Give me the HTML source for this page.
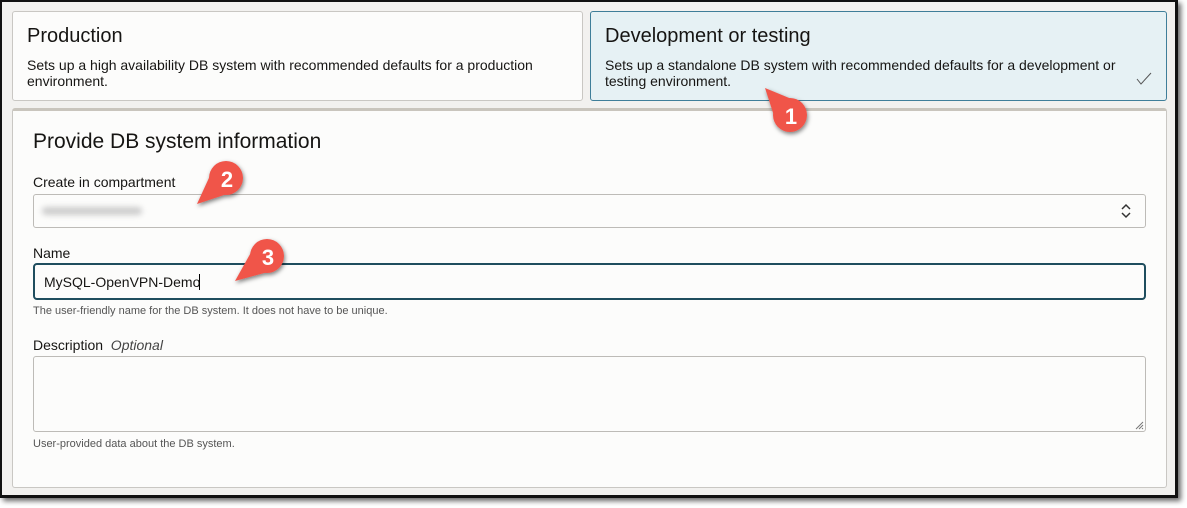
<!DOCTYPE html>
<html><head><meta charset="utf-8"><style>
*{box-sizing:border-box;margin:0;padding:0}
body{width:1187px;height:508px;background:#fff;font-family:"Liberation Sans",Arial,sans-serif;color:#161513;position:relative;overflow:hidden}
.frame{position:absolute;left:0;top:0;width:1178px;height:498px;border:2px solid #111;border-right-width:3px;border-bottom-width:3px;background:#f2f1ef;box-shadow:3px 3px 5px rgba(0,0,0,.6)}
.card{position:absolute;top:11px;height:90px;border:1px solid #c9c7c3;border-radius:3px;background:#fcfcfb;padding:0 14px}
.card h2{font-weight:normal;font-size:20px;margin-top:13px}
.card p{font-size:14px;line-height:16px;margin-top:9px}
.panel{position:absolute;left:12px;top:108px;width:1155px;height:380px;background:#fcfcfb;border:1px solid #c9c7c3;border-top:3px solid #c9c5bd;border-radius:3px}
.abs{position:absolute}
.lbl{font-size:14px}
.box{position:absolute;left:33px;width:1113px;border:1px solid #bdbbb7;border-radius:3px;background:#fcfcfb}
.help{font-size:11px;color:#555}
</style></head><body>
<div class="frame"></div>
<div class="card" style="left:12px;width:571px"><h2>Production</h2><p>Sets up a high availability DB system with recommended defaults for a production<br>environment.</p></div>
<div class="card" style="left:590px;width:577px;background:#e6f1f4;border-color:#3f7e99"><h2>Development or testing</h2><p>Sets up a standalone DB system with recommended defaults for a development or<br>testing environment.</p>
<svg class="abs" style="left:545px;top:60px" width="16" height="14"><path d="M1 7 L5 12 L15 1" fill="none" stroke="#555" stroke-width="1"/></svg></div>
<div class="panel"></div>
<div class="abs" style="left:33px;top:130px;font-size:21px">Provide DB system information</div>
<div class="abs lbl" style="left:33px;top:174px">Create in compartment</div>
<div class="box" style="top:194px;height:34px">
<div class="abs" style="left:8px;top:12px;width:100px;height:8px;background:#ccc;border-radius:4px;filter:blur(3px)"></div>
<svg class="abs" style="left:1086px;top:8px" width="12" height="16"><path d="M2 6 L6 2 L10 6 M2 10 L6 14 L10 10" fill="none" stroke="#333" stroke-width="1.5"/></svg></div>
<div class="abs lbl" style="left:33px;top:245px">Name</div>
<div class="box" style="top:263px;height:37px;border:2px solid #1f4d5e;border-radius:4px"><span class="abs" style="left:9px;top:9px;font-size:14px">MySQL-OpenVPN-Demo<span style="border-left:1px solid #000;margin-left:-1px"></span></span></div>
<div class="abs help" style="left:33px;top:305px">The user-friendly name for the DB system. It does not have to be unique.</div>
<div class="abs lbl" style="left:33px;top:337px">Description <i style="color:#444">&nbsp;Optional</i></div>
<div class="box" style="top:356px;height:76px"><svg class="abs" style="left:1101px;top:64px" width="9" height="9"><path d="M8 1 L1 8 M8 4 L4 8 M8 7 L7 8" stroke="#777" stroke-width="1"/></svg></div>
<div class="abs help" style="left:33px;top:438px">User-provided data about the DB system.</div>
<svg class="abs" style="left:0;top:0" width="1187" height="508">
<defs><filter id="s" x="-50%" y="-50%" width="200%" height="200%"><feDropShadow dx="1" dy="2" stdDeviation="2" flood-opacity=".5"/></filter></defs>
<g fill="#f0544a" filter="url(#s)">
<g><circle cx="790" cy="115" r="17"/><path d="M765 88 L777.5 126.5 L802.5 103.5Z"/></g>
<g><circle cx="226" cy="178" r="17"/><path d="M197 204 L237.3 190.6 L214.7 165.4Z"/></g>
<g><circle cx="267" cy="256" r="17"/><path d="M235 281 L277.5 269.4 L256.5 242.6Z"/></g>
</g>
<g fill="#fff" font-family="Liberation Sans,Arial,sans-serif" font-size="22" font-weight="bold" text-anchor="middle">
<text x="791" y="124">1</text><text x="227" y="187">2</text><text x="268" y="265">3</text></g>
</svg>
</body></html>
